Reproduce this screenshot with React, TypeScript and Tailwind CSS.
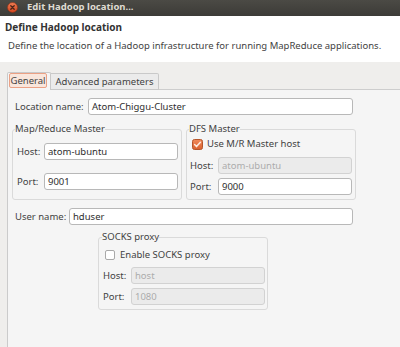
import React from "react";

function TextInput({ value, disabled, w }: { value: string; disabled?: boolean; w: string }) {
  return (
    <div
      className={
        "h-[17px] shrink-0 flex items-center pl-[3px] rounded-[3px] border " +
        w +
        " " +
        (disabled
          ? "bg-[#ebebeb] border-[#d2d2d2] text-[#acacac]"
          : "bg-white border-[#b8b8b8] text-[#2e2e2e]")
      }
    >
      {value}
    </div>
  );
}

function CheckedBox() {
  return (
    <svg width="11" height="11" viewBox="0 0 11 11" className="shrink-0">
      <defs>
        <linearGradient id="cbg" x1="0" y1="0" x2="0" y2="1">
          <stop offset="0" stopColor="#f0895a" />
          <stop offset="1" stopColor="#d9612f" />
        </linearGradient>
      </defs>
      <rect x="0.5" y="0.5" width="10" height="10" rx="2" fill="url(#cbg)" stroke="#b4552b" />
      <path d="M2.6 5.6 L4.5 7.6 L8.4 3.2" fill="none" stroke="#fdebe0" strokeWidth="1.5" strokeLinecap="round" strokeLinejoin="round" />
    </svg>
  );
}

function EmptyBox() {
  return <div className="w-[10px] h-[10px] shrink-0 rounded-[2px] border border-[#a9a9a9] bg-white" />;
}

export default function App() {
  return (
    <div className="w-[400px] h-[347px] overflow-hidden flex flex-col bg-[#efeeec] text-[#424242] font-['Noto_Sans',sans-serif] text-[9.5px] leading-[12px]">
      {/* title bar */}
      <div className="h-[16px] shrink-0 flex items-center pb-[2px] bg-gradient-to-b from-[#4b4a45] to-[#3c3b37]">
        <svg width="11" height="11" viewBox="0 0 11 11" className="ml-[7px]">
          <defs>
            <linearGradient id="cls" x1="0" y1="0" x2="0" y2="1">
              <stop offset="0" stopColor="#f07e55" />
              <stop offset="1" stopColor="#d4441c" />
            </linearGradient>
          </defs>
          <circle cx="5.5" cy="5.5" r="5" fill="url(#cls)" stroke="#8e3216" strokeWidth="0.6" />
          <path d="M3.8 3.8 L7.2 7.2 M7.2 3.8 L3.8 7.2" stroke="#4a2518" strokeWidth="1.3" strokeLinecap="round" />
        </svg>
        <span className="ml-[9px] font-bold text-[9.5px] text-[#dfdbd2]">Edit Hadoop location...</span>
      </div>

      {/* header */}
      <div className="h-[46px] shrink-0 bg-white pl-[5px] pt-[5px]">
        <div className="font-bold text-[10px] text-[#333333]">Define Hadoop location</div>
        <div className="pl-[3px] mt-[7px]">Define the location of a Hadoop infrastructure for running MapReduce applications.</div>
      </div>

      {/* body */}
      <div className="flex-1 flex flex-col pt-[10px] pl-[7px]">
        {/* tabs */}
        <div className="flex items-end h-[18px] shrink-0">
          <div className="h-[18px] w-[44px] border-l border-t border-r border-[#c9c9c9] rounded-t-[2px] bg-[#f5f5f5] pl-[1px]">
            <div className="h-[15px] w-[38px] flex items-center justify-center rounded-[2px] border border-[#eba185] bg-[#f9e6dc]">
              General
            </div>
          </div>
          <div className="h-[17px] w-[108px] flex items-center justify-center border-t border-r border-b border-[#c9c9c9] rounded-tr-[2px] bg-[#ebebeb]">
            Advanced parameters
          </div>
          <div className="flex-1 h-full border-b border-[#cdcdcd]" />
        </div>

        {/* panel */}
        <div className="flex-1 border-l border-[#cbcbcb] bg-[#f5f5f5] pl-[4px] pt-[8px]">
          <div className="w-[344px] flex flex-col">
            {/* location row */}
            <div className="flex items-center justify-between px-[3px]">
              <span>Location name:</span>
              <TextInput value="Atom-Chiggu-Cluster" w="w-[265px]" />
            </div>

            {/* groups */}
            <div className="flex gap-[4px] mt-[8px]">
              <fieldset className="w-[170px] border border-[#dadada] rounded-[3px]">
                <legend className="ml-[2px] leading-[12px]">Map/Reduce Master</legend>
                <div className="flex flex-col pl-[4px] pr-[3px] pb-[9px]">
                  <div className="flex items-center justify-between mt-[8px]">
                    <span>Host:</span>
                    <TextInput value="atom-ubuntu" w="w-[134px]" />
                  </div>
                  <div className="flex items-center justify-between mt-[13px]">
                    <span>Port:</span>
                    <TextInput value="9001" w="w-[134px]" />
                  </div>
                </div>
              </fieldset>
              <fieldset className="w-[170px] border border-[#dadada] rounded-[3px]">
                <legend className="ml-[2px] leading-[12px]">DFS Master</legend>
                <div className="flex flex-col pl-[3px] pr-[3px] pb-[4px]">
                  <div className="flex items-center h-[12px] mt-[3px] ml-[2px] gap-[4px]">
                    <CheckedBox />
                    <span>Use M/R Master host</span>
                  </div>
                  <div className="flex items-center justify-between mt-[7px]">
                    <span>Host:</span>
                    <TextInput value="atom-ubuntu" w="w-[134px]" disabled />
                  </div>
                  <div className="flex items-center justify-between mt-[4px]">
                    <span>Port:</span>
                    <TextInput value="9000" w="w-[134px]" />
                  </div>
                </div>
              </fieldset>
            </div>

            {/* user row */}
            <div className="flex items-center justify-between px-[3px] mt-[8px]">
              <span>User name:</span>
              <TextInput value="hduser" w="w-[284px]" />
            </div>

            {/* socks */}
            <fieldset className="w-[170px] ml-[86px] mt-[6px] border border-[#dadada] rounded-[3px]">
              <legend className="ml-[3px] leading-[12px]">SOCKS proxy</legend>
              <div className="flex flex-col pl-[4px] pr-[2px] pb-[4px]">
                <div className="flex items-center h-[12px] mt-[6px] ml-[2px] gap-[5px]">
                  <EmptyBox />
                  <span>Enable SOCKS proxy</span>
                </div>
                <div className="flex items-center justify-between mt-[6px]">
                  <span>Host:</span>
                  <TextInput value="host" w="w-[134px]" disabled />
                </div>
                <div className="flex items-center justify-between mt-[4px]">
                  <span>Port:</span>
                  <TextInput value="1080" w="w-[134px]" disabled />
                </div>
              </div>
            </fieldset>
          </div>
        </div>
      </div>
    </div>
  );
}
